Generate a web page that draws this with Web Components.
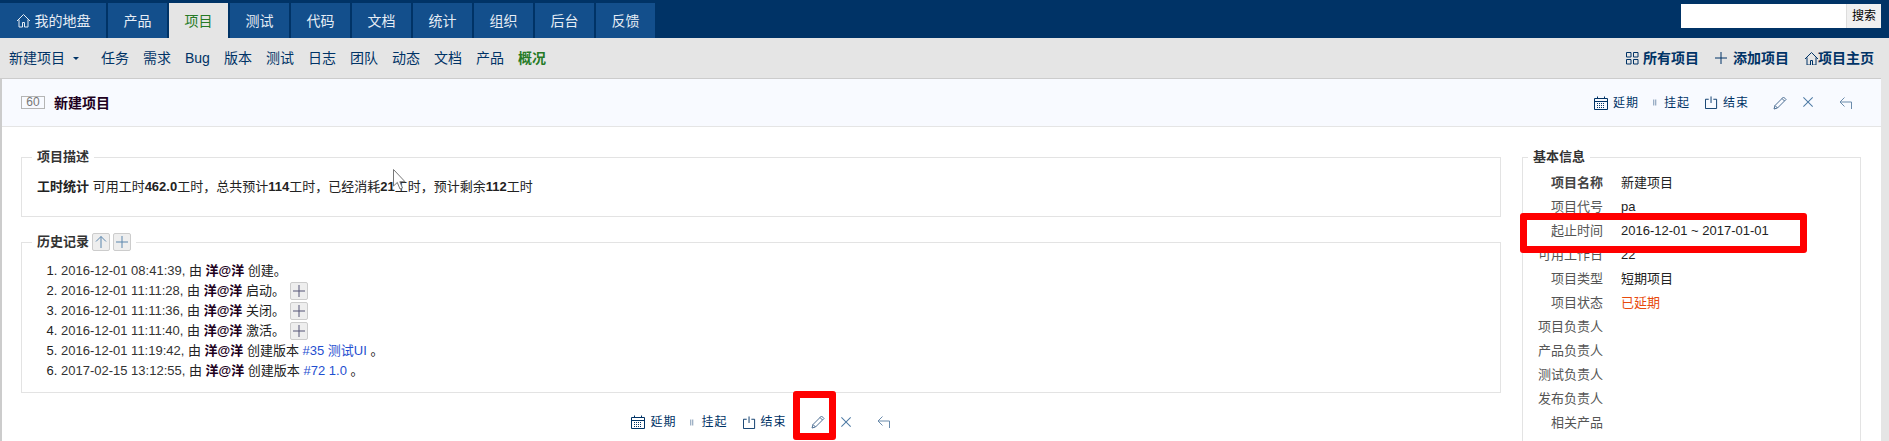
<!DOCTYPE html>
<html lang="zh">
<head>
<meta charset="utf-8">
<title>新建项目</title>
<style>
  html, body { margin: 0; height: 441px; overflow: hidden; background: #e5e5e5; }
  body { font: 13px/20px "Liberation Sans", "Noto Sans CJK SC", sans-serif; color: #222; position: relative; }
  strong { font-weight: 700; }
  li b { color: #200020; font-weight: 700; }
  li a { color: #1f4fd0; text-decoration: none; }
  li span { color: #333; }
</style>
</head>
<body>
<zt-header>
  <zt-tab wide><zt-icon name="home" size="15"></zt-icon>我的地盘</zt-tab>
  <zt-tab>产品</zt-tab>
  <zt-tab active>项目</zt-tab>
  <zt-tab>测试</zt-tab>
  <zt-tab>代码</zt-tab>
  <zt-tab>文档</zt-tab>
  <zt-tab>统计</zt-tab>
  <zt-tab>组织</zt-tab>
  <zt-tab>后台</zt-tab>
  <zt-tab>反馈</zt-tab>
</zt-header>

<zt-subnav>
  <zt-subitem select>新建项目</zt-subitem>
  <zt-subitem>任务</zt-subitem>
  <zt-subitem>需求</zt-subitem>
  <zt-subitem>Bug</zt-subitem>
  <zt-subitem>版本</zt-subitem>
  <zt-subitem>测试</zt-subitem>
  <zt-subitem>日志</zt-subitem>
  <zt-subitem>团队</zt-subitem>
  <zt-subitem>动态</zt-subitem>
  <zt-subitem>文档</zt-subitem>
  <zt-subitem>产品</zt-subitem>
  <zt-subitem active>概况</zt-subitem>
</zt-subnav>

<zt-card>
  <zt-titlebar slot="title" num="60" name="新建项目">
    <zt-actions></zt-actions>
  </zt-titlebar>

  <zt-fieldset legend="项目描述">
    <zt-desc><strong>工时统计</strong> 可用工时<strong>462.0</strong>工时，总共预计<strong>114</strong>工时，已经消耗<strong>21</strong>工时，预计剩余<strong>112</strong>工时</zt-desc>
  </zt-fieldset>

  <zt-fieldset legend="历史记录">
    <zt-mini slot="legend-extra" icon="up"></zt-mini>
    <zt-mini slot="legend-extra" icon="plus"></zt-mini>
    <zt-history>
      <li><span>2016-12-01 08:41:39,</span> 由 <b>洋@洋</b> 创建。</li>
      <li><span>2016-12-01 11:11:28,</span> 由 <b>洋@洋</b> 启动。<zt-mini icon="plus"></zt-mini></li>
      <li><span>2016-12-01 11:11:36,</span> 由 <b>洋@洋</b> 关闭。<zt-mini icon="plus"></zt-mini></li>
      <li><span>2016-12-01 11:11:40,</span> 由 <b>洋@洋</b> 激活。<zt-mini icon="plus"></zt-mini></li>
      <li><span>2016-12-01 11:19:42,</span> 由 <b>洋@洋</b> 创建版本 <a>#35 测试UI</a> 。</li>
      <li><span>2017-02-15 13:12:55,</span> 由 <b>洋@洋</b> 创建版本 <a>#72 1.0</a> 。</li>
    </zt-history>
  </zt-fieldset>

  <zt-actions center></zt-actions>

  <zt-fieldset slot="side" legend="基本信息" tall>
    <zt-info label="项目名称" strong>新建项目</zt-info>
    <zt-info label="项目代号">pa</zt-info>
    <zt-info label="起止时间">2016-12-01 ~ 2017-01-01</zt-info>
    <zt-info label="可用工作日">22</zt-info>
    <zt-info label="项目类型">短期项目</zt-info>
    <zt-info label="项目状态" alert>已延期</zt-info>
    <zt-info label="项目负责人"></zt-info>
    <zt-info label="产品负责人"></zt-info>
    <zt-info label="测试负责人"></zt-info>
    <zt-info label="发布负责人"></zt-info>
    <zt-info label="相关产品"></zt-info>
  </zt-fieldset>
</zt-card>

<!-- annotations drawn over the screenshot -->
<zt-mark style="left:1520px;top:213px;width:287px;height:40px"></zt-mark>
<zt-mark style="left:793px;top:391px;width:43px;height:49px"></zt-mark>
<zt-cursor style="left:393px;top:169px"></zt-cursor>

<script>
const ICONS = {
  home: `<path d="M1 8 7.5 1.5 14 8M3 6.5V14h3.5V9.5h2V14H12V6.5" fill="none" stroke="currentColor"/>`,
  grid: `<path d="M1.5 1.5h4.5v4.5h-4.500zM8.500 1.500h4.500v4.500h-4.500zM1.500 8.500h4.500v4.500h-4.500zM8.500 8.500h4.500v4.500h-4.500z" fill="none" stroke="currentColor"/>`,
  plus: `<path d="M7 1v12M1 7h12" fill="none" stroke="currentColor"/>`,
  cal: `<path d="M.5 2.500h13v11H.5zM.5 5.500h13M3.500 .5v2M10.500 .5v2" fill="none" stroke="currentColor"/><path d="M3 7.500h8M3 9.500h8M3 11.500h8" stroke="currentColor" stroke-dasharray="1 1" fill="none"/>`,
  bars: `<path d="M1.500 1v12M5.500 1v12" fill="none" stroke="currentColor"/>`,
  end: `<path d="M4 3.500H.5v10h12v-10H9M6.500 .5v7" fill="none" stroke="currentColor"/>`,
  pencil: `<path d="M1 13l1-3.500L10.500 1 13 3.500 4.500 12zM2 9.500 4.500 12M9 2.500 11.500 5" fill="none" stroke="currentColor"/>`,
  close: `<path d="M1.500 1.500l10 10M11.500 1.500l-10 10" fill="none" stroke="currentColor" stroke-width="1.100"/>`,
  back: `<path d="M5.500 1.500 1 6l4.500 4.500M1 6h11.500v7" fill="none" stroke="currentColor"/>`,
  up: `<path d="M7 13V1.500M2 6.500l5-5 5 5" fill="none" stroke="currentColor"/>`
}

class ZtIcon extends HTMLElement {
  constructor() {
    super()
    const size = this.getAttribute("size") || 14
    this.attachShadow({ mode: "open" })
    this.shadowRoot.innerHTML = `
      <style>:host { display: inline-flex; flex: none; } svg { display: block; }</style>
      <svg width="${size}" height="${size}" viewBox="0 0 ${size < 15 ? 14 : 15} ${size < 15 ? 14 : 15}">${ICONS[this.getAttribute("name")]}</svg>`
  }
}

const headerTpl = document.createElement("template")
headerTpl.innerHTML = `
  <style>
    :host { display: flex; height: 38px; background: #003366; box-sizing: border-box; padding: 3px 8px 0 0; justify-content: space-between; }
    nav { display: flex; gap: 2px; }
    form { display: flex; margin: 1px 0 0; height: 24px; }
    .q { width: 165px; background: #fff; }
    .go { width: 35px; background: #f0f0f0; border-left: 1px solid #ddd; box-sizing: border-box; color: #000; font: 12px/24px "Liberation Sans", "Noto Sans CJK SC", sans-serif; text-align: center; }
  </style>
  <nav><slot></slot></nav>
  <form><div class="q"></div><div class="go">搜索</div></form>`

class ZtHeader extends HTMLElement {
  constructor() {
    super()
    this.attachShadow({ mode: "open" })
    this.shadowRoot.appendChild(headerTpl.content.cloneNode(true))
  }
}

const tabTpl = document.createElement("template")
tabTpl.innerHTML = `
  <style>
    :host { display: flex; align-items: center; justify-content: center; gap: 4px; width: 59px; height: 35px; background: #134f8c; color: #e6edf5; font-size: 14px; }
    :host([wide]) { width: 106px; }
    :host([active]) { background: #e5e5e5; color: #267a26; }
  </style>
  <slot></slot>`

class ZtTab extends HTMLElement {
  constructor() {
    super()
    this.attachShadow({ mode: "open" })
    this.shadowRoot.appendChild(tabTpl.content.cloneNode(true))
  }
}

const subnavTpl = document.createElement("template")
subnavTpl.innerHTML = `
  <style>
    :host { display: flex; justify-content: space-between; align-items: center; height: 40px; padding: 0 15px 0 9px; color: #003366; font-size: 14px; }
    .left { display: flex; gap: 14px; }
    .right { display: flex; align-items: center; font-weight: 700; }
    .right span { display: flex; align-items: center; }
    .all zt-icon { margin-right: 4px; }
    .add { margin-left: 15px; }
    .add zt-icon { margin-right: 5px; }
    .main { margin-left: 15px; }
  </style>
  <div class="left"><slot></slot></div>
  <div class="right">
    <span class="all"><zt-icon name="grid"></zt-icon>所有项目</span>
    <span class="add"><zt-icon name="plus"></zt-icon>添加项目</span>
    <span class="main"><zt-icon name="home"></zt-icon>项目主页</span>
  </div>`

class ZtSubnav extends HTMLElement {
  constructor() {
    super()
    this.attachShadow({ mode: "open" })
    this.shadowRoot.appendChild(subnavTpl.content.cloneNode(true))
  }
}

const subitemTpl = document.createElement("template")
subitemTpl.innerHTML = `
  <style>
    :host { display: flex; align-items: center; }
    :host([active]) { color: #267a26; font-weight: 700; }
    :host([select]) { margin-right: 8px; }
    i { display: none; margin-left: 8px; border: 3px solid transparent; border-top-color: #003366; border-bottom: 0; width: 0; }
    :host([select]) i { display: block; }
  </style>
  <slot></slot><i></i>`

class ZtSubitem extends HTMLElement {
  constructor() {
    super()
    this.attachShadow({ mode: "open" })
    this.shadowRoot.appendChild(subitemTpl.content.cloneNode(true))
  }
}

const cardTpl = document.createElement("template")
cardTpl.innerHTML = `
  <style>
    :host { display: block; width: 1881px; background: #fff; box-sizing: border-box; border-top: 1px solid #ccc; border-left: 2px solid #ccc; }
    .body { display: grid; grid-template-columns: 1480px 339px; column-gap: 21px; padding: 21px 0 0 19px; }
    .main { display: flex; flex-direction: column; gap: 16px; }
  </style>
  <slot name="title"></slot>
  <div class="body">
    <div class="main"><slot></slot></div>
    <div><slot name="side"></slot></div>
  </div>`

class ZtCard extends HTMLElement {
  constructor() {
    super()
    this.attachShadow({ mode: "open" })
    this.shadowRoot.appendChild(cardTpl.content.cloneNode(true))
  }
}

const titleTpl = document.createElement("template")
titleTpl.innerHTML = `
  <style>
    :host { display: flex; align-items: center; justify-content: space-between; height: 48px; box-sizing: border-box; background: #f8faff; border-bottom: 1px solid #e5e5e5; padding: 0 28px 0 19px; }
    .head { display: flex; align-items: center; gap: 9px; color: #200020; font-size: 14px; font-weight: 700; }
    .num { box-sizing: border-box; width: 24px; height: 13px; border: 1px solid #b5b5b5; color: #777; font: 12px/11px "Liberation Sans", sans-serif; text-align: center; }
  </style>
  <div class="head"><span class="num"></span><span class="name"></span></div>
  <slot></slot>`

class ZtTitlebar extends HTMLElement {
  constructor() {
    super()
    this.attachShadow({ mode: "open" })
    this.shadowRoot.appendChild(titleTpl.content.cloneNode(true))
    this.shadowRoot.querySelector(".num").innerText = this.getAttribute("num")
    this.shadowRoot.querySelector(".name").innerText = this.getAttribute("name")
  }
}

const actionsTpl = document.createElement("template")
actionsTpl.innerHTML = `
  <style>
    :host { display: flex; align-items: center; color: #003366; font-size: 12px; letter-spacing: 1px; line-height: 14px; }
    :host([center]) { justify-content: center; margin-top: 6px; }
    span { display: flex; align-items: center; gap: 5px; }
    .bars { gap: 4px; margin-left: 14px; color: #003366; }
    .end { margin-left: 15px; }
    .edit { margin-left: 24px; color: #4d6f94; }
    .del { margin-left: 15px; color: #4f7ba5; }
    .back { margin-left: 24px; color: #6b8bab; }
  </style>
  <span><zt-icon name="cal"></zt-icon>延期</span>
  <span class="bars"><zt-icon name="bars" size="7"></zt-icon>挂起</span>
  <span class="end"><zt-icon name="end" size="13"></zt-icon>结束</span>
  <span class="edit"><zt-icon name="pencil"></zt-icon></span>
  <span class="del"><zt-icon name="close" size="13"></zt-icon></span>
  <span class="back"><zt-icon name="back"></zt-icon></span>`

class ZtActions extends HTMLElement {
  constructor() {
    super()
    this.attachShadow({ mode: "open" })
    this.shadowRoot.appendChild(actionsTpl.content.cloneNode(true))
  }
}

const fieldsetTpl = document.createElement("template")
fieldsetTpl.innerHTML = `
  <style>
    :host { display: block; }
    fieldset { margin: 0; padding: 0 15px; border: 1px solid #e3e3e3; min-width: 0; }
    legend { display: flex; align-items: center; gap: 3px; height: 18px; margin-left: -5px; padding: 0 5px; font-size: 13px; line-height: 18px; font-weight: 700; color: #333; }
    :host([tall]) fieldset { padding: 0 10px 60px; }
    ::slotted(zt-mini) { font-weight: 400; }
  </style>
  <fieldset>
    <legend><span></span><slot name="legend-extra"></slot></legend>
    <slot></slot>
  </fieldset>`

class ZtFieldset extends HTMLElement {
  constructor() {
    super()
    this.attachShadow({ mode: "open" })
    this.shadowRoot.appendChild(fieldsetTpl.content.cloneNode(true))
    this.shadowRoot.querySelector("legend span").innerText = this.getAttribute("legend")
  }
}

const descTpl = document.createElement("template")
descTpl.innerHTML = `
  <style>
    :host { display: block; padding: 11px 0 19px; line-height: 20px; color: #222; }
  </style>
  <slot></slot>`

class ZtDesc extends HTMLElement {
  constructor() {
    super()
    this.attachShadow({ mode: "open" })
    this.shadowRoot.appendChild(descTpl.content.cloneNode(true))
  }
}

const historyTpl = document.createElement("template")
historyTpl.innerHTML = `
  <style>
    :host { display: block; padding: 10px 0 11px; }
    ol { margin: 0; padding: 0 0 0 24px; color: #333; }
    ::slotted(li) { height: 20px; line-height: 20px; color: #222; }
  </style>
  <ol><slot></slot></ol>`

class ZtHistory extends HTMLElement {
  constructor() {
    super()
    this.attachShadow({ mode: "open" })
    this.shadowRoot.appendChild(historyTpl.content.cloneNode(true))
  }
}

const miniTpl = document.createElement("template")
miniTpl.innerHTML = `
  <style>
    :host { display: inline-flex; align-items: center; justify-content: center; box-sizing: border-box; width: 18px; height: 18px; vertical-align: top; margin: 1px 0 0 5px; background: #eee; border: 1px solid #ccc; border-radius: 2px; color: #557; }
    :host([slot]) { margin: 0; color: #5b86ad; }
  </style>
  <zt-icon></zt-icon>`

class ZtMini extends HTMLElement {
  constructor() {
    super()
    this.attachShadow({ mode: "open" })
    this.shadowRoot.innerHTML = miniTpl.innerHTML.replace("<zt-icon>", `<zt-icon name="${this.getAttribute("icon")}">`)
  }
}

const infoTpl = document.createElement("template")
infoTpl.innerHTML = `
  <style>
    :host { display: grid; grid-template-columns: 70px 1fr; column-gap: 18px; height: 24px; line-height: 24px; white-space: nowrap; color: #222; }
    :host(:first-of-type) { margin-top: 5px; }
    .label { justify-self: end; color: #555; }
    :host([strong]) .label { font-weight: 700; color: #444; }
    :host([alert]) .value { color: #e84a0c; }
  </style>
  <div class="label"></div>
  <div class="value"><slot></slot></div>`

class ZtInfo extends HTMLElement {
  constructor() {
    super()
    this.attachShadow({ mode: "open" })
    this.shadowRoot.appendChild(infoTpl.content.cloneNode(true))
    this.shadowRoot.querySelector(".label").innerText = this.getAttribute("label")
  }
}

const markTpl = document.createElement("template")
markTpl.innerHTML = `
  <style>
    :host { position: absolute; box-sizing: border-box; border: 7px solid #ff0000; border-radius: 3px; }
  </style>`

class ZtMark extends HTMLElement {
  constructor() {
    super()
    this.attachShadow({ mode: "open" })
    this.shadowRoot.appendChild(markTpl.content.cloneNode(true))
  }
}

const cursorTpl = document.createElement("template")
cursorTpl.innerHTML = `
  <style>
    :host { position: absolute; width: 13px; height: 21px; }
    svg { display: block; }
  </style>
  <svg width="13" height="21" viewBox="0 0 13 21">
    <path d="M.5.5v16.500l3.800-3.500 2.700 6.500 2.500-1-2.700-6.300h5.200z" fill="#fff" stroke="#777"/>
  </svg>`

class ZtCursor extends HTMLElement {
  constructor() {
    super()
    this.attachShadow({ mode: "open" })
    this.shadowRoot.appendChild(cursorTpl.content.cloneNode(true))
  }
}

window.customElements.define("zt-icon", ZtIcon)
window.customElements.define("zt-header", ZtHeader)
window.customElements.define("zt-tab", ZtTab)
window.customElements.define("zt-subnav", ZtSubnav)
window.customElements.define("zt-subitem", ZtSubitem)
window.customElements.define("zt-card", ZtCard)
window.customElements.define("zt-titlebar", ZtTitlebar)
window.customElements.define("zt-actions", ZtActions)
window.customElements.define("zt-fieldset", ZtFieldset)
window.customElements.define("zt-desc", ZtDesc)
window.customElements.define("zt-history", ZtHistory)
window.customElements.define("zt-mini", ZtMini)
window.customElements.define("zt-info", ZtInfo)
window.customElements.define("zt-mark", ZtMark)
window.customElements.define("zt-cursor", ZtCursor)
</script>
</body>
</html>
